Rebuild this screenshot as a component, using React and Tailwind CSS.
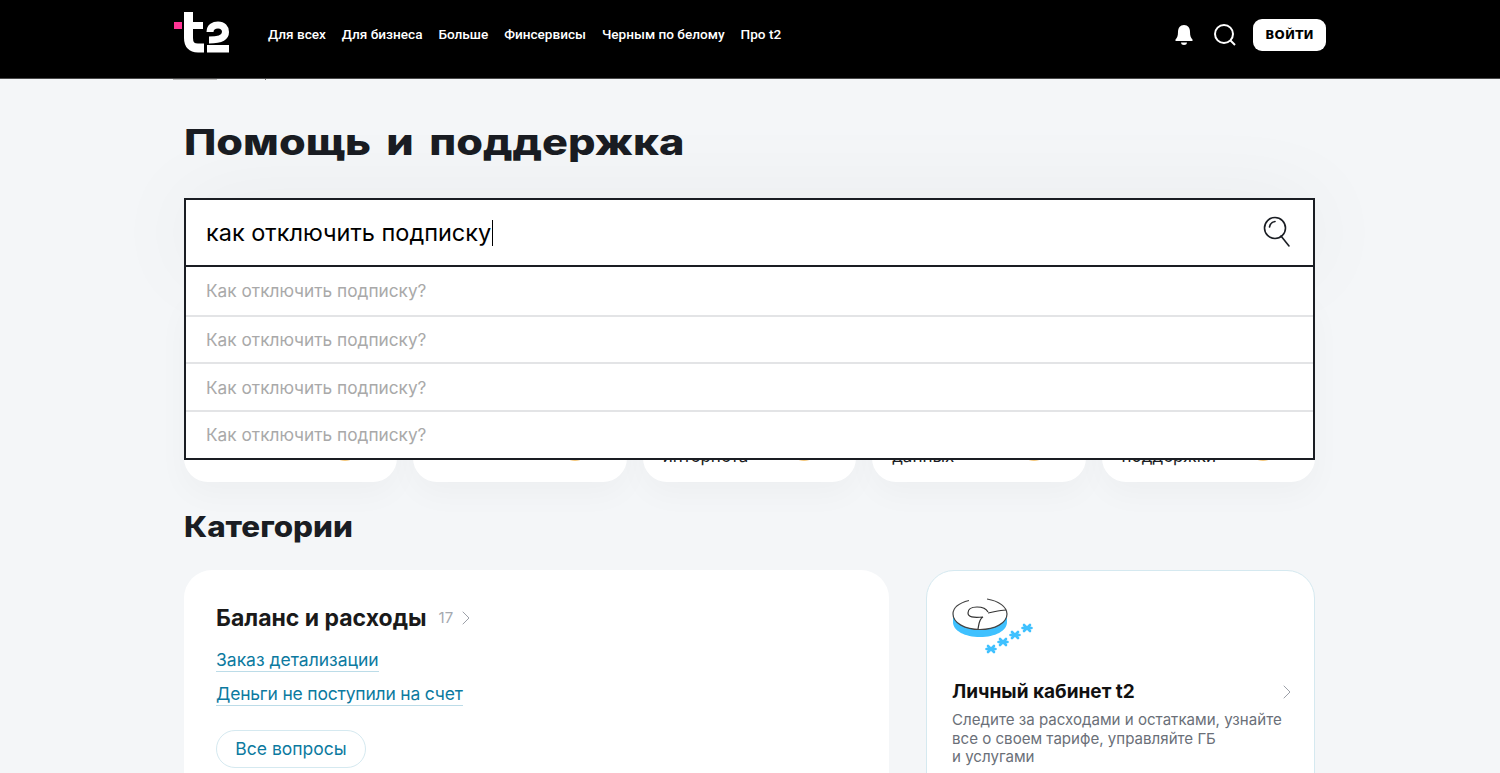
import { ChevronRight } from "lucide-react";

const NAV = ["Для всех", "Для бизнеса", "Больше", "Финсервисы", "Черным по белому", "Про t2"];
const CARDS = [null, null, ["Настройка", "интернета"], ["Передача", "данных"], ["Служба", "поддержки"]];
const SUGGESTIONS = ["Как отключить подписку?", "Как отключить подписку?", "Как отключить подписку?", "Как отключить подписку?"];

const Logo = () => (
  <svg width="57" height="41" viewBox="0 0 57 41" fill="none">
    <rect x="1" y="10" width="8" height="7" fill="#ff3495" />
    <path d="M15.500 0V26Q15.500 36 25 36H31" stroke="#fff" strokeWidth="9" />
    <rect x="11" y="10" width="19" height="7" fill="#fff" />
    <path d="M37 20C37 15 41 13 45 13C50 13 52.500 16 52.500 20C52.500 26 46 28 36 28" stroke="#fff" strokeWidth="7" />
    <rect x="34" y="33" width="22" height="7.500" fill="#fff" />
  </svg>
);

const Bell = () => (
  <svg width="20" height="22" viewBox="0 0 20 22" fill="#fff">
    <path d="M10 1C6 1 4 4 4 8C4 12 3 14 1.500 15.500V17H18.500V15.500C17 14 16 12 16 8C16 4 14 1 10 1Z" />
    <path d="M7 18.500H13C13 20.200 11.700 21 10 21C8.300 21 7 20.200 7 18.500Z" />
  </svg>
);

const Star = ({ x, y }) => (
  <g transform={`translate(${x} ${y})`} stroke="#3fc1ff" strokeWidth="2.600" strokeLinecap="round">
    <path d="M-4.500 0H4.500M-3 -3L3 3M3 -3L-3 3" />
  </g>
);

const DiskIcon = () => (
  <svg width="84" height="60" viewBox="0 0 84 60" fill="none">
    <path d="M1 16V25C1 34 13 40 28 40C43 40 55 34 55 25V16Z" fill="#3fc1ff" />
    <ellipse cx="28" cy="17" rx="27" ry="15.500" fill="#fff" />
    <path d="M17 3.500C7 6 1 11 1 17C1 26 13 32.500 28 32.500C43 32.500 55 26 55 17C55 10 47 4 35 2" stroke="#444" strokeWidth="1.200" />
    <path d="M36 15C34 11 30 10 25 10C19 10 16 12 16 16C16 20 21 21 31 20C27 22 27 27 26 32M36 16C42 15 48 13 54 13" stroke="#333" strokeWidth="1.200" />
    <Star x={75} y={31} />
    <Star x={63} y={38} />
    <Star x={51} y={45} />
    <Star x={39} y={52} />
  </svg>
);

export default function App() {
  return (
    <div className="h-[773px] overflow-hidden bg-[#f4f6f8] font-['Inter',sans-serif] text-[#1a1d23]">
      {/* Header */}
      <header className="relative z-20 flex h-[79px] items-center justify-between border-b border-[#4a4a4a] bg-black pl-[173px] pr-[174px]">
        <div className="flex items-center">
          <div className="mb-[13px]">
            <Logo />
          </div>
          <nav className="ml-[38px] flex items-center gap-[15.900px] font-['Roboto',sans-serif] text-[13.600px] font-medium text-white">
            {NAV.map((item) => (
              <a key={item} className="mb-[10px]">{item}</a>
            ))}
          </nav>
        </div>
        <div className="mb-[8px] flex items-center">
          <Bell />
          <svg className="ml-[19px] mr-[-1px]" width="24" height="24" viewBox="0 0 24 24" fill="none" stroke="#fff" strokeWidth="2">
            <circle cx="11" cy="11" r="9" />
            <path d="M17.500 17.500L22 22" />
          </svg>
          <button className="ml-[17px] h-[32px] w-[73px] rounded-[9px] bg-white font-['DejaVu_Sans',sans-serif] text-[12px] font-bold tracking-[0.2px] text-black">
            ВОЙТИ
          </button>
        </div>
      </header>

      {/* Breadcrumb peeking out from under the header */}
      <div className="ml-[173px] flex h-px items-start">
        <div className="h-px w-[44px] bg-[#bbbbbb]" />
        <div className="ml-[48px] h-px w-px bg-[#777777]" />
      </div>

      <main className="pl-[184px] pr-[185px]">
        <h1 className="mt-[39px] origin-left scale-x-[1.2] whitespace-nowrap text-[36px] font-extrabold leading-[46px] [word-spacing:5px]">
          Помощь и поддержка
        </h1>

        {/* Search with opened suggestions */}
        <div className="relative mt-[33px] shadow-[0_0_90px_rgba(0,0,0,0.05)]">
          <div className="flex h-[69px] items-center justify-between border-2 border-[#1a1d23] bg-white pl-[20px] pr-[22px]">
            <div className="flex items-center text-[23.500px] text-black">
              как отключить подписку
              <span className="ml-px inline-block h-[26px] w-px bg-black" />
            </div>
            <svg className="mb-[1px]" width="28" height="32" viewBox="0 0 28 32" fill="none" stroke="#1a1d23" strokeWidth="1.600">
              <circle cx="12" cy="12" r="10.500" />
              <path d="M6.500 11C7 8 9 6 12 5.500" strokeLinecap="round" />
              <path d="M18 20L26 30" strokeLinecap="round" />
            </svg>
          </div>
          <div className="absolute inset-x-0 top-[69px] z-10 border-2 border-t-0 border-[#1a1d23] bg-white">
            {SUGGESTIONS.map((text, i) => (
              <div key={i} className="flex h-[47.700px] items-center border-t-2 border-[#e3e4e6] pl-[20px] pt-[1px] text-[17.250px] text-[#a9a9a9] first:border-t-0">
                {text}
              </div>
            ))}
          </div>
        </div>

        {/* Quick links, mostly covered by the suggestions */}
        <div className="mt-[25px] grid grid-cols-5 gap-4">
          {CARDS.map((lines, i) => (
            <div key={i} className="flex h-[190px] items-end justify-between rounded-[24px] bg-white pb-[16px] pl-[20px] pr-[40px] shadow-[0_12px_32px_rgba(0,0,0,0.03)]">
              <div className="text-[17px] leading-[20px] text-[#1a1d23]">
                {lines && lines.map((l) => <div key={l}>{l}</div>)}
              </div>
              <div className="mb-[5px] h-[14px] w-[24px] self-end rounded-b-full bg-[#f4c77a]" />
            </div>
          ))}
        </div>

        <h2 className="mt-[27px] origin-left scale-x-[1.12] text-[28px] font-extrabold leading-[36px]">Категории</h2>

        <div className="mt-[25px] flex items-start justify-between">
          <section className="h-[260px] w-[705px] rounded-[28px] bg-white px-[32px] pt-[33px]">
            <div className="flex items-center">
              <h3 className="text-[23px] font-bold leading-[30px] text-[#1a1a1a]">Баланс и расходы</h3>
              <span className="ml-[12px] text-[15px] text-[#a5a9b0]">17</span>
              <ChevronRight className="ml-[1px]" size={24} strokeWidth={1} color="#9ca0a8" />
            </div>
            <div className="mt-[16px] flex flex-col items-start gap-[11px] text-[17.500px] leading-[22px] text-[#0c7a9f]">
              <a className="border-b border-[#bcdce8]">Заказ детализации</a>
              <a className="border-b border-[#bcdce8] tracking-[-0.2px]">Деньги не поступили на счет</a>
            </div>
            <button className="mt-[24px] h-[38px] w-[150px] rounded-full border border-[#d5e9f0] text-[17.500px] text-[#0c7a9f]">
              Все вопросы
            </button>
          </section>

          <section className="h-[260px] w-[389px] rounded-[28px] border border-[#d5e9f0] bg-white pl-[25px] pr-[15px] pt-[26px]">
            <DiskIcon />
            <div className="mt-[22px] flex items-center justify-between">
              <h3 className="text-[19px] font-bold leading-[26px] text-[#111111]">Личный кабинет t2</h3>
              <ChevronRight size={24} strokeWidth={1} color="#9ca0a8" />
            </div>
            <p className="mt-[6px] text-[15.100px] leading-[18.500px] text-[#6a6f78]">
              Следите за расходами и остатками, узнайте
              <br />
              все о своем тарифе, управляйте ГБ
              <br />
              и услугами
            </p>
          </section>
        </div>
      </main>
    </div>
  );
}
